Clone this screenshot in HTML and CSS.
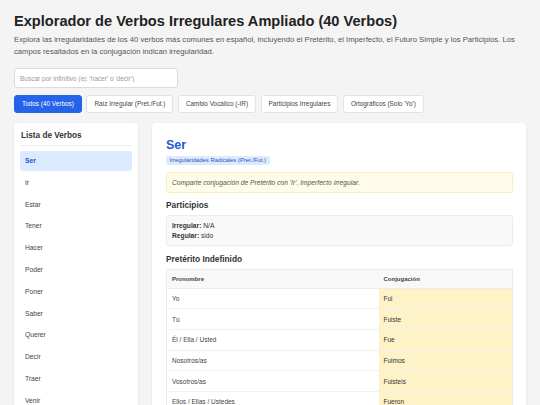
FILE: index.html
```html
<!DOCTYPE html>
<html lang="es">
<head>
<meta charset="utf-8">
<title>Explorador de Verbos Irregulares</title>
<link rel="stylesheet" href="styles.css">
</head>
<body>
<h1 class="title">Explorador de Verbos Irregulares Ampliado (40 Verbos)</h1>
<p class="intro">Explora las irregularidades de los 40 verbos más comunes en español, incluyendo el Pretérito, el Imperfecto, el Futuro Simple y los Participios. Los campos resaltados en la conjugación indican irregularidad.</p>
<input class="search" type="text" placeholder="Buscar por infinitivo (ej: 'hacer' o 'decir')">
<div class="filters">
  <button class="filter active">Todos (40 Verbos)</button>
  <button class="filter">Raíz Irregular (Pret./Fut.)</button>
  <button class="filter">Cambio Vocálico (-IR)</button>
  <button class="filter">Participios Irregulares</button>
  <button class="filter">Ortográficos (Solo 'Yo')</button>
</div>
<div class="layout">
  <aside class="sidebar">
    <h2 class="side-title">Lista de Verbos</h2>
    <ul class="verb-list">
      <li class="verb selected">Ser</li>
      <li class="verb">Ir</li>
      <li class="verb">Estar</li>
      <li class="verb">Tener</li>
      <li class="verb">Hacer</li>
      <li class="verb">Poder</li>
      <li class="verb">Poner</li>
      <li class="verb">Saber</li>
      <li class="verb">Querer</li>
      <li class="verb">Decir</li>
      <li class="verb">Traer</li>
      <li class="verb">Venir</li>
      <li class="verb">Dar</li>
    </ul>
  </aside>
  <main class="detail">
    <h2 class="verb-name">Ser</h2>
    <span class="badge">Irregularidades Radicales (Pret./Fut.)</span>
    <div class="note">Comparte conjugación de Pretérito con 'Ir'. Imperfecto irregular.</div>
    <h3 class="section">Participios</h3>
    <div class="participles">
      <div><b>Irregular:</b> N/A</div>
      <div><b>Regular:</b> sido</div>
    </div>
    <h3 class="section">Pretérito Indefinido</h3>
    <table class="conj">
      <thead>
        <tr><th class="c1">Pronombre</th><th>Conjugación</th></tr>
      </thead>
      <tbody>
        <tr><td>Yo</td><td class="irr">Fui</td></tr>
        <tr><td>Tú</td><td class="irr">Fuiste</td></tr>
        <tr><td>Él / Ella / Usted</td><td class="irr">Fue</td></tr>
        <tr><td>Nosotros/as</td><td class="irr">Fuimos</td></tr>
        <tr><td>Vosotros/as</td><td class="irr">Fuisteis</td></tr>
        <tr><td>Ellos / Ellas / Ustedes</td><td class="irr">Fueron</td></tr>
      </tbody>
    </table>
  </main>
</div>
</body>
</html>
```
FILE: styles.css
```css
* { box-sizing: border-box; }
html, body { height: 100%; }
body {
  margin: 0;
  padding: 13px 14px 0;
  background: #f4f4f4;
  font-family: "Liberation Sans", Arial, sans-serif;
  color: #333;
  overflow: hidden;
}
.title {
  margin: 0;
  font-size: 14.6px;
  line-height: 17px;
  font-weight: 700;
  color: #222;
}
.intro {
  margin: 4px 0 0;
  font-size: 7.7px;
  line-height: 12px;
  color: #555;
}
.search {
  display: block;
  margin-top: 10px;
  width: 164px;
  height: 20px;
  padding: 0 5px;
  border: 1px solid #dcdcdc;
  border-radius: 3px;
  background: #fff;
  font-family: inherit;
  font-size: 6.5px;
  outline: none;
}
.search::placeholder { color: #9a9a9a; }
.filters {
  display: flex;
  gap: 4.5px;
  margin-top: 7px;
}
.filter {
  height: 17.5px;
  padding: 0 7px;
  border: 1px solid #e2e2e2;
  border-radius: 3px;
  background: #fff;
  color: #444;
  font-family: inherit;
  font-size: 6.4px;
}
.filter.active {
  background: #2563eb;
  border-color: #2563eb;
  color: #fff;
}
.layout {
  display: grid;
  grid-template-columns: 124px 1fr;
  gap: 14px;
  margin-top: 10.5px;
}
.sidebar, .detail {
  background: #fff;
  border-radius: 4px;
  box-shadow: 0 1px 3px rgba(0,0,0,0.08);
}
.sidebar {
  padding: 7px 6px;
}
.side-title {
  margin: 0;
  padding: 0 1px 4px;
  font-size: 8.2px;
  line-height: 11px;
  font-weight: 700;
  color: #333;
  border-bottom: 1px solid #eee;
}
.verb-list {
  list-style: none;
  margin: 5px 0 0;
  padding: 0;
  display: flex;
  flex-direction: column;
  gap: 1.5px;
}
.verb {
  height: 20.3px;
  line-height: 20.3px;
  padding: 0 5px;
  font-size: 6.7px;
  color: #444;
  border-radius: 3px;
}
.verb.selected {
  background: #dbeafe;
  color: #1d4ed8;
  font-weight: 700;
}
.detail {
  padding: 13.5px 13px 0 14px;
}
.verb-name {
  margin: 0;
  font-size: 12.5px;
  line-height: 16px;
  font-weight: 700;
  color: #2557d6;
}
.badge {
  display: block;
  width: fit-content;
  margin-top: 3.5px;
  padding: 0 3.5px;
  height: 9px;
  line-height: 9px;
  border-radius: 2px;
  background: #dbeafe;
  color: #2f55b8;
  font-size: 5.9px;
}
.note {
  margin-top: 7px;
  height: 21px;
  padding: 0 5px;
  line-height: 19px;
  border: 1px solid #fbefb8;
  border-radius: 3px;
  background: #fefce8;
  font-size: 6.7px;
  font-style: italic;
  color: #555;
}
.section {
  margin: 7px 0 0;
  font-size: 8.3px;
  line-height: 11px;
  font-weight: 700;
  color: #333;
}
.participles {
  margin-top: 4px;
  padding: 4.5px 5px;
  border: 1px solid #ececec;
  border-radius: 3px;
  background: #f9f9f9;
  font-size: 6.7px;
  line-height: 10px;
  color: #333;
}
.participles + .section { margin-top: 7.5px; }
.conj {
  margin-top: 4px;
  width: 100%;
  border-collapse: collapse;
  border: 1px solid #ececec;
  font-size: 6.5px;
  color: #444;
}
.conj th {
  height: 19px;
  padding: 0 5px;
  text-align: left;
  font-size: 6px;
  font-weight: 700;
  color: #444;
  background: #f8f8f8;
  border-bottom: 1px solid #ececec;
}
.conj th.c1 { width: 212px; }
.conj td {
  height: 20.7px;
  padding: 0 5px;
  border-bottom: 1px solid #f1f1f1;
}
.conj td.irr {
  background: #fef3c7;
  color: #333;
}
```
